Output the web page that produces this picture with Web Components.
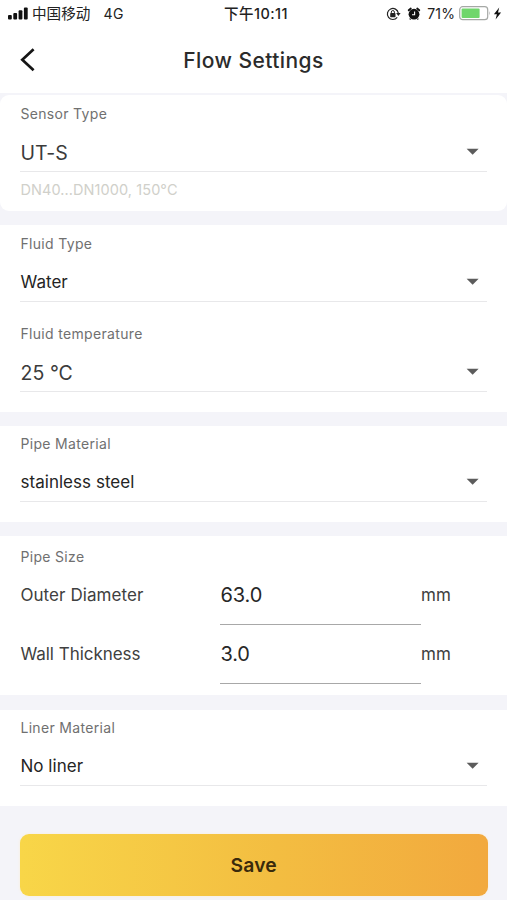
<!DOCTYPE html>
<html lang="en">
<head>
<meta charset="utf-8">
<title>Flow Settings</title>
<style>
html,body{margin:0;height:900px;overflow:hidden;background:#f4f4f9}
body{font-family:Inter,"Noto Sans CJK SC",sans-serif;color:#333}
</style>
</head>
<body>
<flow-app></flow-app>
<script>
const define = (name, html, init) => customElements.define(name, class extends HTMLElement {
  constructor() {
    super();
    this.attachShadow({mode: 'open'}).innerHTML = html;
  }
  connectedCallback() { if (init) init(this, this.shadowRoot); }
});

define('status-bar', `
<style>
:host{display:grid;grid-template-columns:1fr auto 1fr;align-items:center;height:27px;padding:0 5px 0 8px;color:#222;font-size:14px;line-height:20px}
.left,.right{display:flex;align-items:center}
.right{justify-content:flex-end}
svg{display:block;flex:none}
.carrier{font-size:14.6px;margin-left:4px;white-space:nowrap}
.net{margin-left:13px;letter-spacing:.6px}
.time{font-weight:500;font-size:14.5px;white-space:nowrap;letter-spacing:.45px;padding-left:2px}
.pct{margin:0 4px 0 6px;letter-spacing:.1px}
</style>
<div class="left">
<svg width="20" height="13" viewBox="0 0 20 13" fill="#111"><rect x="0" y="8" width="3.8" height="4.4" rx="1"/><rect x="5.3" y="6" width="3.8" height="6.4" rx="1"/><rect x="10.6" y="3.3" width="3.8" height="9.1" rx="1"/><rect x="15.9" y=".5" width="3.8" height="11.9" rx="1"/></svg>
<span class="carrier">中国移动</span><span class="net">4G</span>
</div>
<div class="time">下午10:11</div>
<div class="right">
<svg width="15" height="14" viewBox="0 0 15 14"><path d="M11.2 10.4A5.5 5.5 0 1 1 12.3 6" fill="none" stroke="#222" stroke-width="1.2"/><path d="M10.1 5.9h4.5l-2.2 3.1z" fill="#222"/><rect x="4.2" y="6.1" width="5.3" height="4.1" rx=".6" fill="#222"/><path d="M5.3 6.2V5.1a1.55 1.55 0 0 1 3.1 0v1.1" fill="none" stroke="#222" stroke-width="1"/></svg>
<svg style="margin-left:6px" width="14" height="14" viewBox="0 0 14 14"><circle cx="7" cy="7.2" r="5.4" fill="#111"/><path d="M1.7 3.3L3.8 1.5M12.3 3.3L10.2 1.5" stroke="#111" stroke-width="1.8" stroke-linecap="round"/><path d="M3.4 11.7l-.6.8M10.6 11.7l.6.8" stroke="#111" stroke-width="1.4"/><path d="M7.6 4.5v3.2H5" fill="none" stroke="#fff" stroke-width="1.1"/></svg>
<span class="pct">71%</span>
<svg width="32" height="15" viewBox="0 0 32 15"><rect x=".7" y=".7" width="28" height="13" rx="3" fill="#fff" stroke="#a5a8a5" stroke-width="1.2"/><rect x="2.6" y="2.5" width="18" height="9.4" rx="1" fill="#70d66c"/><path d="M30.1 5q1.6 2.2 0 4.4z" fill="#a5a8a5"/></svg>
<svg style="margin-left:2px" width="9" height="13" viewBox="0 0 9 13"><path d="M6.2.5L.9 7.2h3L2.6 12.5 8.1 5.5H5z" fill="#111"/></svg>
</div>`);

define('nav-header', `
<style>
:host{display:grid;grid-template-columns:60px 1fr 60px;align-items:center;height:66px}
svg{display:block;margin-left:20px}
h1{margin:1px 0 0;padding-top:1px;text-align:center;font-size:21px;line-height:28px;font-weight:500;letter-spacing:.42px;color:#2b2b2b}
</style>
<svg width="16" height="25" viewBox="0 0 16 25"><path d="M13.6 1.3L2.3 11.8l11.3 10.5" fill="none" stroke="#151515" stroke-width="2.7"/></svg>
<h1><slot></slot></h1>`);

define('settings-card', `
<style>
:host{display:block;box-sizing:border-box;background:#fff;padding:0 20px;flex:none}
:host([rounded]){border-radius:9px}
</style><slot></slot>`);

define('field-label', `
<style>:host{display:block;font-size:14px;line-height:20px;height:20px;color:#707070;letter-spacing:.33px;white-space:nowrap;padding-left:.4px}</style><slot></slot>`);

define('select-field', `
<style>
:host{display:block;color:#242424}
.row{display:flex;justify-content:space-between;align-items:center;height:38px;margin-top:9px;border-bottom:1.5px solid #e8e8ea;padding:0 8px 0 .5px;font-size:17px;letter-spacing:.03px}
:host([large]) .row{font-size:19.5px;letter-spacing:.05px;color:#3b3b3b}
:host([large]) .row span{padding-top:2px}
svg{display:block;margin-top:.5px}
</style>
<field-label></field-label>
<div class="row"><span><slot></slot></span><svg width="13" height="8" viewBox="0 0 13 8"><path d="M.6 .7h12l-6 6z" fill="#5c5c5c"/></svg></div>`,
(el, root) => { root.querySelector('field-label').textContent = el.getAttribute('label'); });

define('measure-field', `
<style>
:host{display:grid;grid-template-columns:200px 201px auto;height:59px;font-size:17px;letter-spacing:.08px;color:#404040;line-height:38px}
.name{padding-left:.4px}
:host([tight]) .name{letter-spacing:-.03px}
.value{box-sizing:border-box;height:49px;border-bottom:1.5px solid #a8a8a8;font-size:20px;letter-spacing:-.1px;color:#272727;line-height:39px;padding-left:.4px}
</style>
<span class="name"></span><div class="value"><slot></slot></div><span>mm</span>`,
(el, root) => { root.querySelector('.name').textContent = el.getAttribute('label'); });

define('save-button', `
<style>
:host{display:block}
button{display:block;width:100%;height:62px;border:0;border-radius:9px;padding:0 0 1px;background:linear-gradient(90deg,#f8d648,#f3bd41 55%,#f2a93e);font:600 19.3px Inter,sans-serif;letter-spacing:.2px;color:#3a2a0c;box-shadow:0 0 3px #faeed8}
</style><button><slot></slot></button>`);

define('flow-app', `
<style>
:host{display:flex;flex-direction:column;height:900px;width:507px;background:#f4f4f9}
header{background:#fff;height:93px;flex:none;margin-bottom:2px}
.hint{font-size:14.5px;line-height:20px;color:#d0d0ca;margin-top:8px;letter-spacing:.08px;padding-left:.4px}
.stack{display:flex;flex-direction:column;gap:22px}
save-button{margin:28px 19.5px 0 20px}
</style>
<header><status-bar></status-bar><nav-header>Flow Settings</nav-header></header>
<settings-card rounded style="height:116px;margin-bottom:14px;padding-top:9px"><select-field label="Sensor Type" large>UT-S</select-field><div class="hint">DN40...DN1000, 150°C</div></settings-card>
<settings-card style="height:187px;margin-bottom:14px;padding-top:9px"><div class="stack"><select-field label="Fluid Type">Water</select-field><select-field label="Fluid temperature" large>25 °C</select-field></div></settings-card>
<settings-card style="height:96px;margin-bottom:14px;padding-top:8px"><select-field label="Pipe Material">stainless steel</select-field></settings-card>
<settings-card style="height:159px;margin-bottom:15px;padding-top:11px"><field-label style="margin-bottom:9px">Pipe Size</field-label><measure-field label="Outer Diameter">63.0</measure-field><measure-field tight label="Wall Thickness">3.0</measure-field></settings-card>
<settings-card style="height:96px;padding-top:8px"><select-field label="Liner Material">No liner</select-field></settings-card>
<save-button>Save</save-button>`);
</script>
</body>
</html>
